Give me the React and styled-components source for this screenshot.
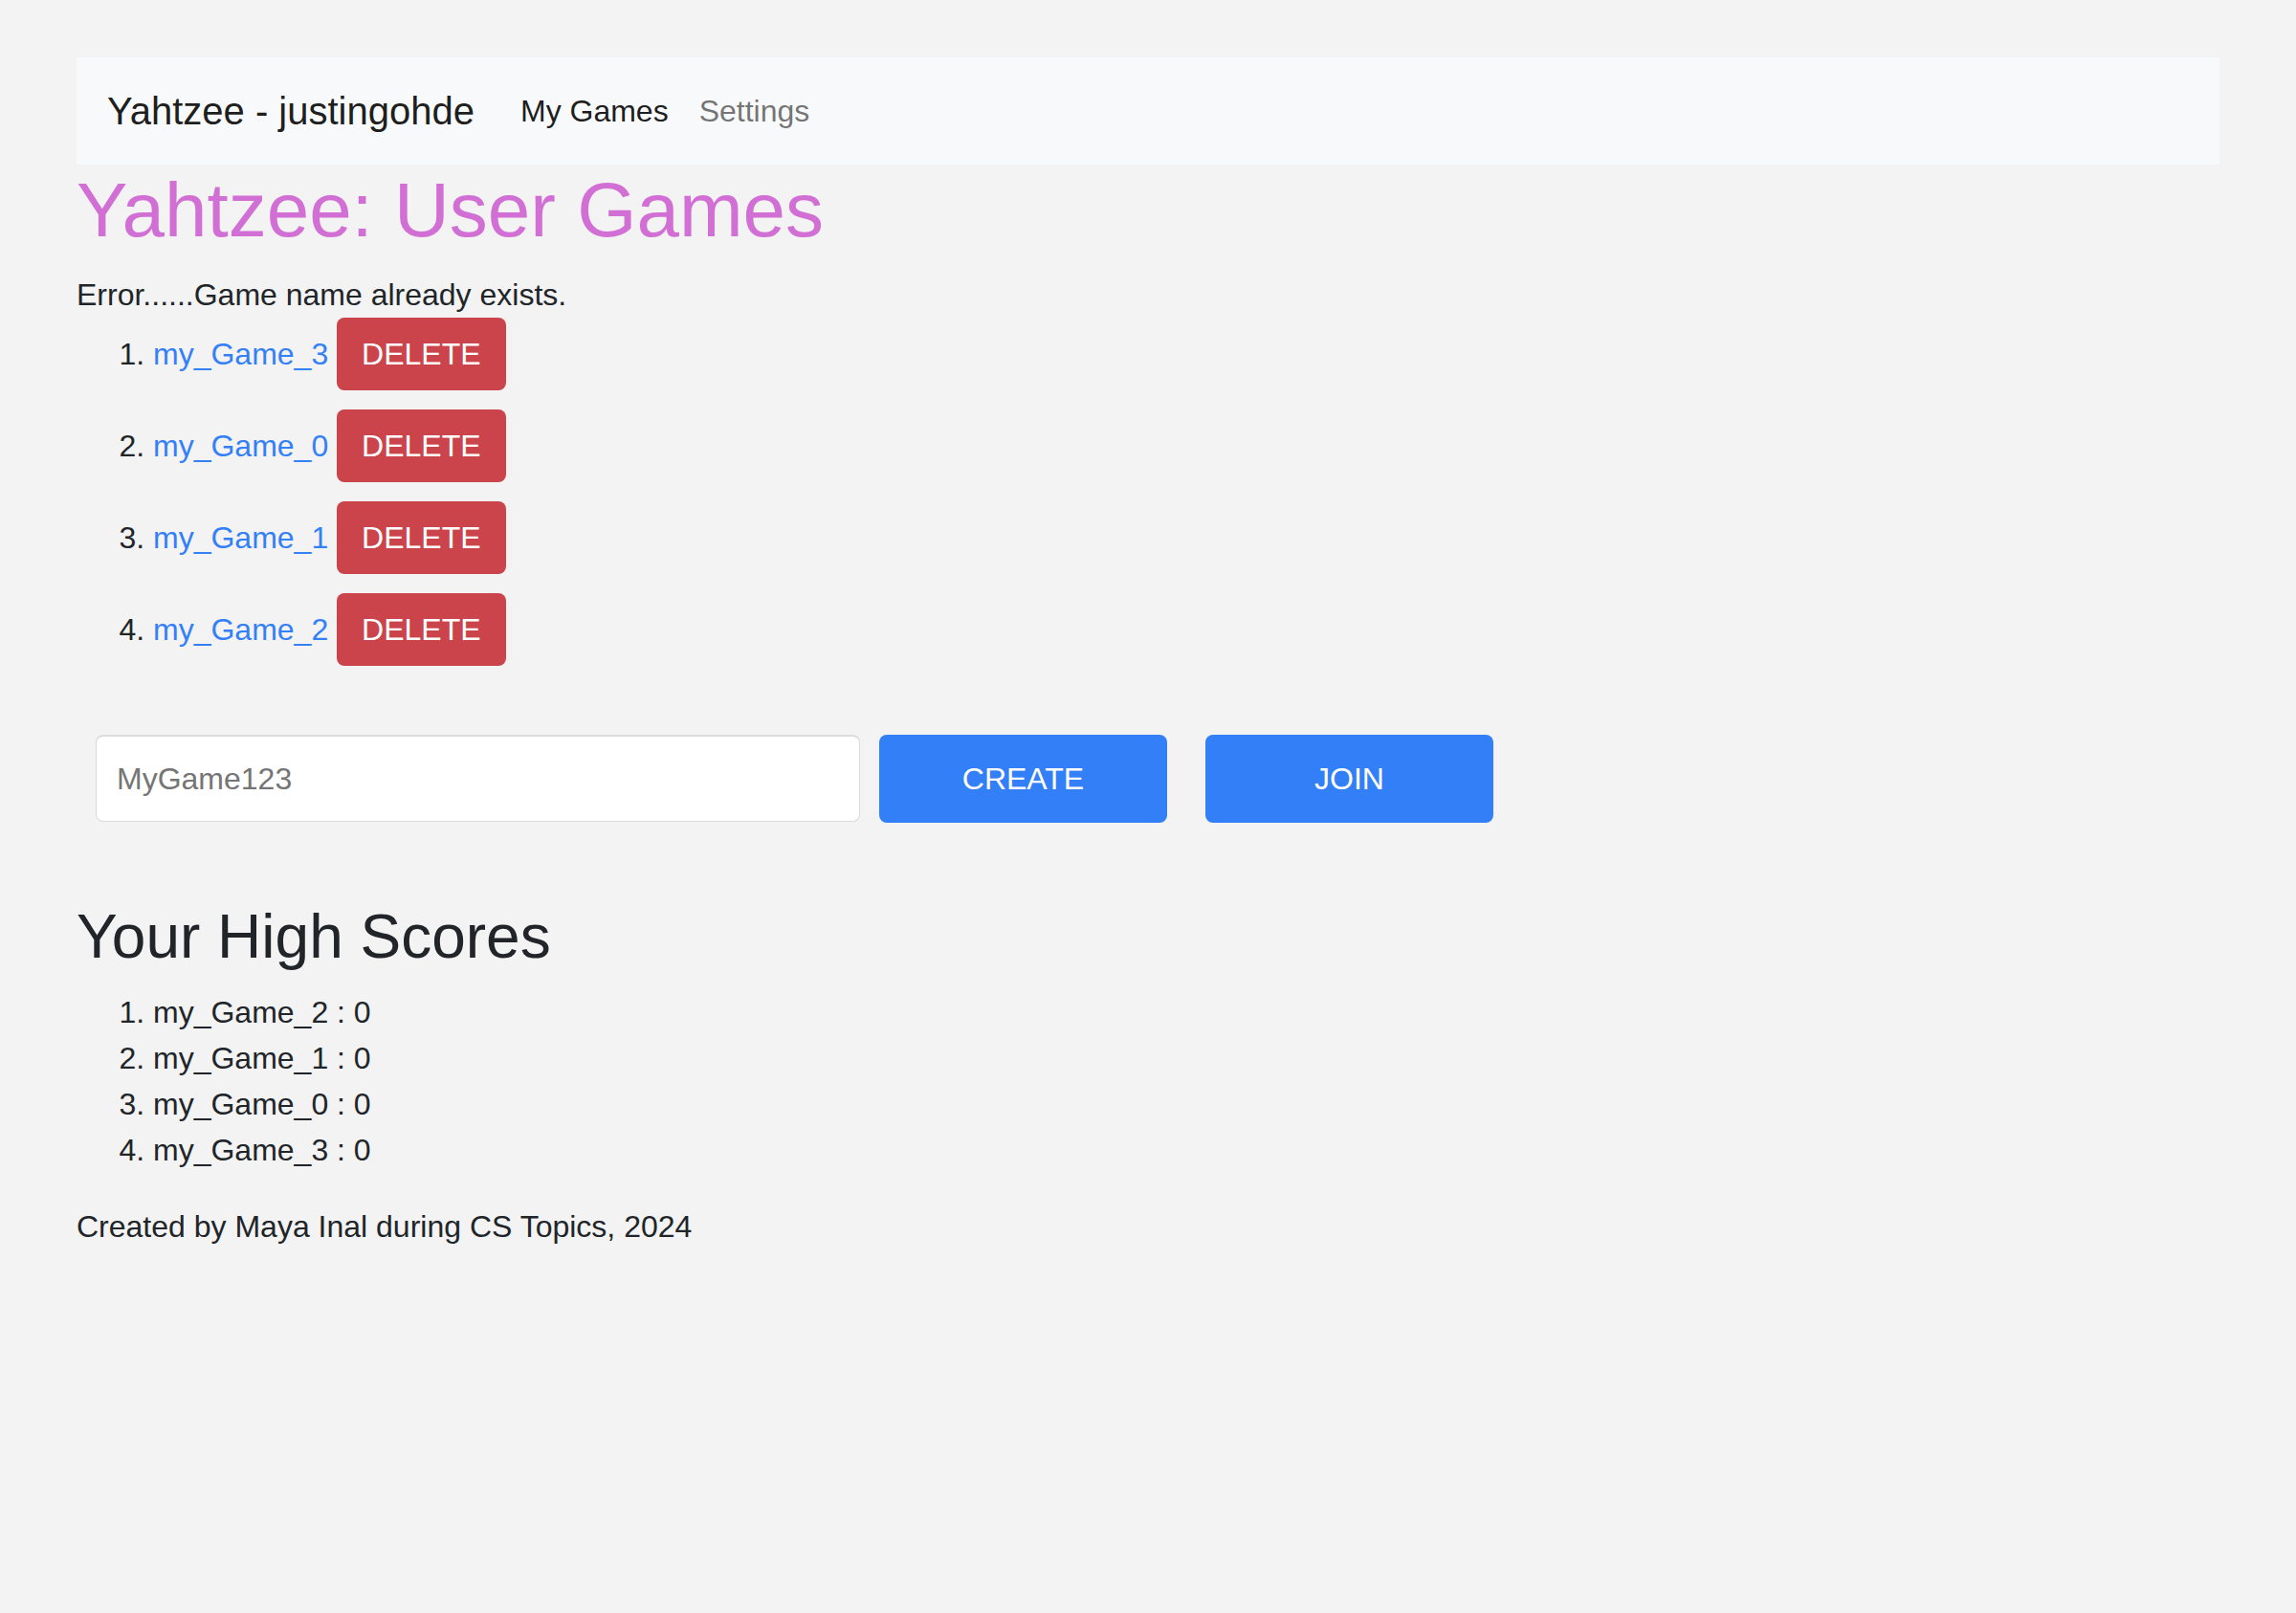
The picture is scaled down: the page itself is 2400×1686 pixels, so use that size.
import React from "react";
import styled, { createGlobalStyle } from "styled-components";

const GlobalStyle = createGlobalStyle`
  html, body {
    margin: 0;
    padding: 0;
    background: #f3f3f3;
  }
  body {
    font-family: "Liberation Sans", Arial, Helvetica, sans-serif;
    font-size: 32px;
    line-height: 1.5;
    color: #212529;
  }
  * { box-sizing: border-box; }
`;

const Page = styled.div`
  padding: 60px 80px 80px;
  min-height: 1686px;
`;

const NavBar = styled.nav`
  display: flex;
  align-items: center;
  height: 112px;
  padding: 0 32px;
  background: #f8f9fa;
`;

const Brand = styled.a`
  font-size: 40px;
  line-height: 60px;
  margin-right: 32px;
  color: rgba(0, 0, 0, 0.9);
  text-decoration: none;
`;

const NavLink = styled.a`
  font-size: 32px;
  line-height: 48px;
  padding: 0 16px;
  color: ${(p) => (p.$active ? "rgba(0,0,0,0.9)" : "rgba(0,0,0,0.55)")};
  text-decoration: none;
`;

const Title = styled.h1`
  margin: 0 0 16px;
  font-size: 80px;
  line-height: 96px;
  font-weight: 400;
  color: #d16fd4;
`;

const ErrorText = styled.div`
  line-height: 48px;
`;

const GameList = styled.ol`
  margin: 0;
  padding-left: 80px;
`;

const GameItem = styled.li`
  margin-bottom: 20px;
`;

const GameLink = styled.a`
  color: #3380f7;
  text-decoration: none;
`;

const DeleteButton = styled.button`
  display: inline-block;
  font-family: inherit;
  font-size: 32px;
  line-height: 48px;
  padding: 14px 26px;
  border: none;
  border-radius: 8px;
  background: #cc444b;
  color: #fff;
  vertical-align: baseline;
`;

const CreateRow = styled.div`
  display: flex;
  align-items: stretch;
  margin-top: 72px;
  padding-left: 20px;
`;

const NameInput = styled.input`
  width: 799px;
  height: 91px;
  padding: 0 21px;
  font-family: inherit;
  font-size: 32px;
  color: #212529;
  background: #fff;
  border: 1px solid #dadada;
  border-top: 2px solid #dcdcdc;
  border-radius: 8px;
  outline: none;
  &::placeholder {
    color: #757575;
  }
`;

const ActionButton = styled.button`
  width: 301px;
  height: 92px;
  margin-left: ${(p) => p.$gap}px;
  font-family: inherit;
  font-size: 32px;
  border: none;
  border-radius: 8px;
  background: #337ff7;
  color: #fff;
`;

const SectionTitle = styled.h2`
  margin: 81px 0 16px;
  font-size: 64px;
  line-height: 1.2;
  font-weight: 400;
  color: #212529;
`;

const ScoreList = styled.ol`
  margin: 0 0 32px;
  padding-left: 80px;
`;

const Footer = styled.p`
  margin: 0;
`;

const games = ["my_Game_3", "my_Game_0", "my_Game_1", "my_Game_2"];
const scores = [
  ["my_Game_2", 0],
  ["my_Game_1", 0],
  ["my_Game_0", 0],
  ["my_Game_3", 0],
];

export default function App() {
  return (
    <>
      <GlobalStyle />
      <Page>
        <NavBar>
          <Brand>Yahtzee - justingohde</Brand>
          <NavLink $active>My Games</NavLink>
          <NavLink>Settings</NavLink>
        </NavBar>
        <Title>Yahtzee: User Games</Title>
        <ErrorText>Error......Game name already exists.</ErrorText>
        <GameList>
          {games.map((g) => (
            <GameItem key={g}>
              <GameLink href="#">{g}</GameLink> <DeleteButton>DELETE</DeleteButton>
            </GameItem>
          ))}
        </GameList>
        <CreateRow>
          <NameInput placeholder="MyGame123" />
          <ActionButton $gap={20}>CREATE</ActionButton>
          <ActionButton $gap={40}>JOIN</ActionButton>
        </CreateRow>
        <SectionTitle>Your High Scores</SectionTitle>
        <ScoreList>
          {scores.map(([n, s]) => (
            <li key={n}>
              {n} : {s}
            </li>
          ))}
        </ScoreList>
        <Footer>Created by Maya Inal during CS Topics, 2024</Footer>
      </Page>
    </>
  );
}
